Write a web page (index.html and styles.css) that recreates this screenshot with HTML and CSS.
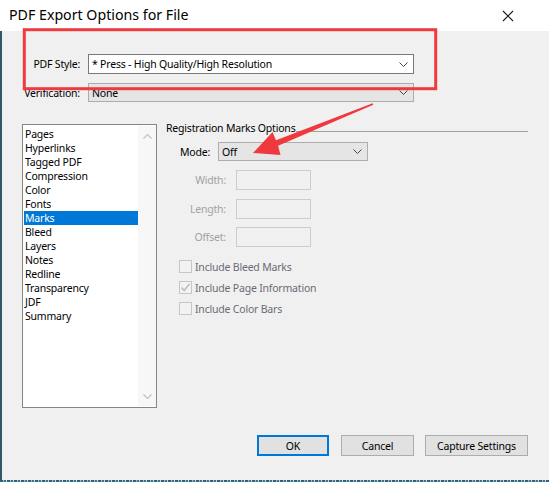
FILE: index.html
```html
<!DOCTYPE html>
<html>
<head>
<meta charset="utf-8">
<link rel="stylesheet" href="styles.css">
</head>
<body>
<div class="window">
  <div class="titlebar">
    <span class="title">PDF Export Options for File</span>
    <svg class="close" width="12" height="12" viewBox="0 0 12 12"><path d="M1 1 L11 11 M11 1 L1 11" stroke="#1a1a1a" stroke-width="1.1" fill="none"/></svg>
  </div>
  <div class="body">
    <div class="top-row">
      <span class="top-label">PDF Style:</span>
      <div class="select select-white">
        <span>* Press - High Quality/High Resolution</span>
        <svg class="chev" width="9" height="5" viewBox="0 0 9 5"><polyline points="0.5,0.5 4.5,4.5 8.5,0.5" stroke="#444" stroke-width="1" fill="none"/></svg>
      </div>
    </div>
    <div class="top-row second">
      <span class="top-label">Verification:</span>
      <div class="select select-grey">
        <span>None</span>
        <svg class="chev" width="9" height="5" viewBox="0 0 9 5"><polyline points="0.5,0.5 4.5,4.5 8.5,0.5" stroke="#444" stroke-width="1" fill="none"/></svg>
      </div>
    </div>
    <div class="main">
      <div class="list">
        <div class="items">
          <div class="item">Pages</div>
          <div class="item">Hyperlinks</div>
          <div class="item">Tagged PDF</div>
          <div class="item">Compression</div>
          <div class="item">Color</div>
          <div class="item">Fonts</div>
          <div class="item selected">Marks</div>
          <div class="item">Bleed</div>
          <div class="item">Layers</div>
          <div class="item">Notes</div>
          <div class="item">Redline</div>
          <div class="item">Transparency</div>
          <div class="item">JDF</div>
          <div class="item">Summary</div>
        </div>
        <div class="scrollbar">
          <svg width="9" height="5" viewBox="0 0 9 5"><polyline points="0.5,4.5 4.5,0.5 8.5,4.5" stroke="#c2c2c2" stroke-width="1.2" fill="none"/></svg>
          <svg width="9" height="5" viewBox="0 0 9 5"><polyline points="0.5,0.5 4.5,4.5 8.5,0.5" stroke="#c2c2c2" stroke-width="1.2" fill="none"/></svg>
        </div>
      </div>
      <div class="panel">
        <div class="group-head">
          <span>Registration Marks Options</span>
          <div class="group-line"></div>
        </div>
        <div class="mode-row">
          <span class="mode-label">Mode:</span>
          <div class="select select-grey mode-select">
            <span>Off</span>
            <svg class="chev" width="9" height="5" viewBox="0 0 9 5"><polyline points="0.5,0.5 4.5,4.5 8.5,0.5" stroke="#444" stroke-width="1" fill="none"/></svg>
          </div>
        </div>
        <div class="field-row">
          <span class="field-label">Width:</span>
          <div class="field-input"></div>
        </div>
        <div class="field-row">
          <span class="field-label">Length:</span>
          <div class="field-input"></div>
        </div>
        <div class="field-row last">
          <span class="field-label">Offset:</span>
          <div class="field-input"></div>
        </div>
        <div class="checks">
          <div class="check-row"><span class="box"></span><span>Include Bleed Marks</span></div>
          <div class="check-row"><span class="box"><svg width="11" height="11" viewBox="0 0 11 11"><polyline points="1.5,5.5 4.2,8.5 9.5,1.8" stroke="#b4b4b4" stroke-width="1.3" fill="none"/></svg></span><span>Include Page Information</span></div>
          <div class="check-row"><span class="box"></span><span>Include Color Bars</span></div>
        </div>
      </div>
    </div>
    <div class="buttons">
      <div class="btn btn-default">OK</div>
      <div class="btn btn-cancel">Cancel</div>
      <div class="btn btn-capture">Capture Settings</div>
    </div>
  </div>
  <div class="strip"></div>
  <svg class="annot" width="549" height="482" viewBox="0 0 549 482">
    <rect x="24.3" y="29.7" width="411.4" height="59" fill="none" stroke="#ef3b3f" stroke-width="3"/>
    <polygon points="253,153 272.5,132 276,140.2 372.7,103.3 373.3,104.7 278.1,145.8 280.5,155" fill="#f0393e"/>
  </svg>
</div>
</body>
</html>
```

FILE: styles.css
```css
* { box-sizing: border-box; }
html, body { margin: 0; padding: 0; }
body {
  width: 549px;
  height: 482px;
  overflow: hidden;
  background: #f0f0f0;
  font-family: "Noto Sans", "Open Sans", sans-serif;
  font-size: 10.5px;
  letter-spacing: -0.2px;
  color: #000;
}
.window {
  position: relative;
  width: 549px;
  height: 482px;
}
.titlebar {
  height: 31px;
  background: #fff;
  display: flex;
  align-items: center;
  justify-content: space-between;
  padding: 0 35px 0 9px;
}
.title {
  font-size: 14.2px;
  letter-spacing: 0;
  line-height: 20px;
  color: #000;
  margin-top: -1px;
}
.close { display: block; }
.body {
  height: 449px;
  border-left: 2px solid #2f5866;
  background: #f0f0f0;
  padding-top: 23px;
}
.top-row {
  display: flex;
  align-items: center;
}
.top-row.second { margin-top: 9px; }
.top-label {
  width: 78px;
  text-align: right;
  line-height: 14px;
}
.select {
  display: flex;
  align-items: center;
  justify-content: space-between;
  padding: 0 5px 0 3px;
  line-height: 14px;
}
.select-white {
  margin-left: 8px;
  width: 326px;
  height: 20px;
  background: #fff;
  border: 1px solid #7a7a7a;
}
.select-grey {
  background: #e5e5e5;
  border: 1px solid #adadad;
}
.top-row .select-grey {
  margin-left: 8px;
  width: 326px;
  height: 19px;
}
.chev { display: block; }
.main {
  display: flex;
  margin-top: 22px;
}
.list {
  margin-left: 20px;
  width: 135px;
  height: 284px;
  background: #fff;
  border: 1px solid #858585;
  display: flex;
  padding: 1px 0 1px 1px;
}
.items {
  width: 114px;
  padding-top: 1px;
}
.item {
  height: 14px;
  line-height: 14px;
  padding-left: 1px;
  color: #000;
}
.item.selected {
  background: #0078d7;
  color: #fff;
}
.scrollbar {
  flex: 1;
  background: #f7f7f7;
  display: flex;
  flex-direction: column;
  justify-content: space-between;
  align-items: center;
  padding: 8px 0 7px;
}
.scrollbar svg { display: block; }
.panel {
  margin-left: 9px;
  width: 362px;
  margin-top: -3px;
}
.group-head {
  display: flex;
  align-items: flex-end;
  height: 14px;
  line-height: 14px;
}
.group-line {
  flex: 1;
  border-top: 1px solid #a0a0a0;
  margin-bottom: 3px;
  margin-left: 1px;
}
.mode-row {
  display: flex;
  align-items: center;
  margin-top: 7px;
  padding-left: 14px;
}
.mode-label {
  width: 38px;
  line-height: 14px;
}
.mode-select {
  width: 150px;
  height: 19px;
}
.field-row {
  display: flex;
  align-items: center;
  margin-top: 9px;
}
.field-row.last { margin-top: 8px; }
.field-label {
  width: 60px;
  text-align: right;
  color: #a2a2a2;
  line-height: 14px;
}
.field-input {
  margin-left: 10px;
  width: 75px;
  height: 20px;
  border: 1px solid #cccccc;
  background: #f0f0f0;
}
.checks {
  margin-top: 13px;
  padding-left: 13px;
  display: flex;
  flex-direction: column;
  gap: 8px;
}
.check-row {
  display: flex;
  align-items: center;
  height: 13px;
  line-height: 14px;
  color: #6b6b76;
}
.box {
  width: 13px;
  height: 13px;
  border: 1px solid #c6c6c6;
  background: #f2f2f2;
  margin-right: 3px;
  display: flex;
  align-items: center;
  justify-content: center;
}
.box svg { display: block; }
.buttons {
  display: flex;
  justify-content: flex-end;
  margin-top: 27px;
  padding-right: 21px;
}
.btn {
  height: 21px;
  background: #e1e1e1;
  border: 1px solid #adadad;
  display: flex;
  align-items: center;
  justify-content: center;
  line-height: 14px;
}
.btn-default {
  width: 72px;
  border: 2px solid #0078d7;
}
.btn-cancel {
  width: 73px;
  margin-left: 12px;
}
.btn-capture {
  width: 103px;
  margin-left: 11px;
}
.strip {
  height: 2px;
  background: repeating-linear-gradient(90deg, #2b6577 0 3px, #9db7c0 3px 4px, #3c7487 4px 6px, #c7d6db 6px 7px);
}
.annot {
  position: absolute;
  left: 0;
  top: 0;
  pointer-events: none;
}
```
